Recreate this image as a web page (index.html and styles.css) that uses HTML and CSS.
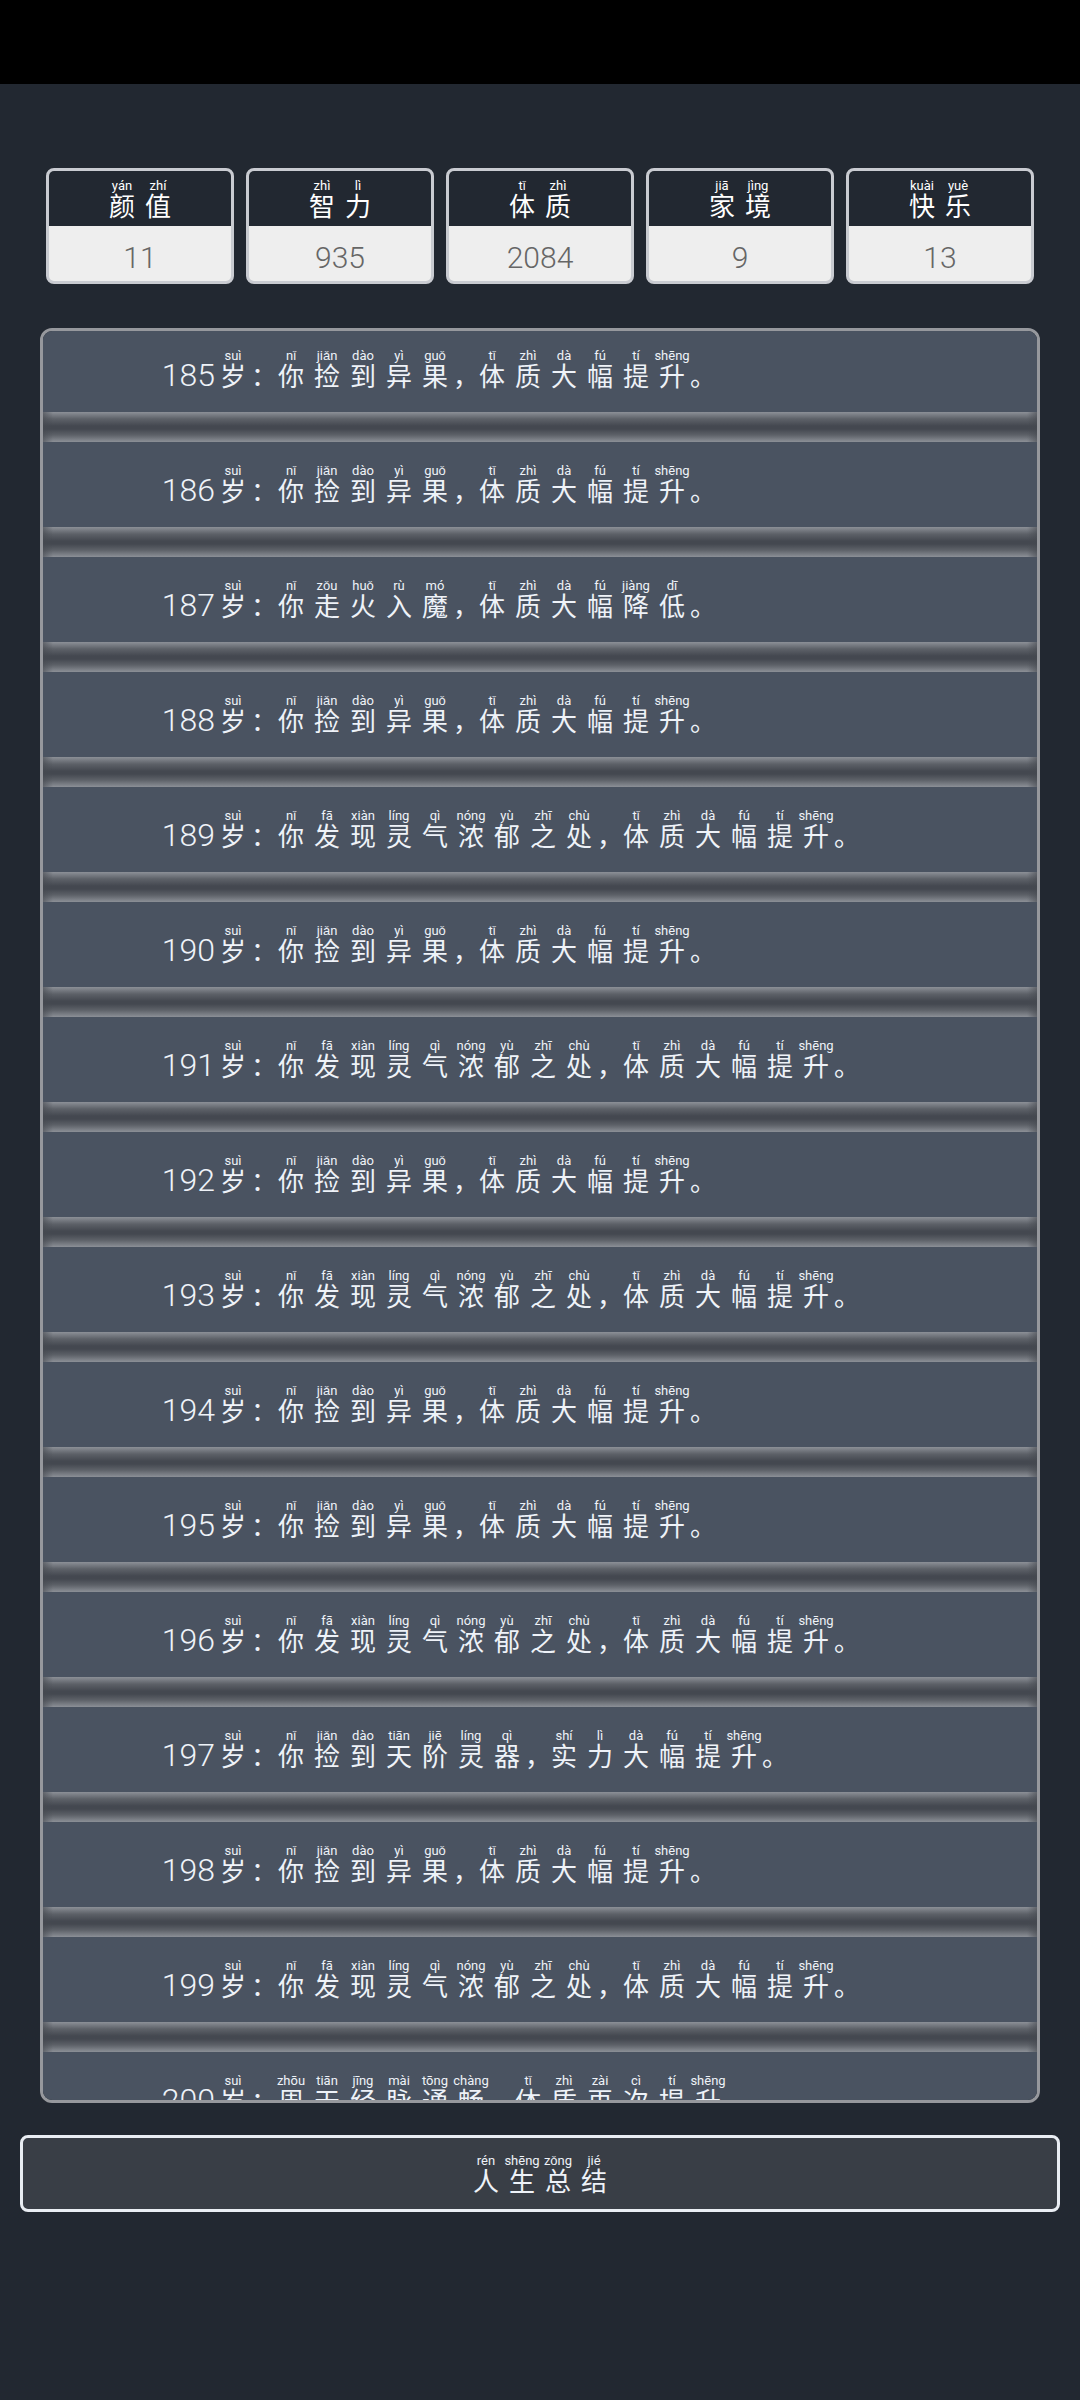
FILE: index.html
```
<!DOCTYPE html>
<html lang="zh-CN">
<head>
    <meta charset="UTF-8">
    <meta name="viewport" content="width=device-width, initial-scale=1.0">
    <title>人生</title>
    <link rel="stylesheet" href="styles.css">
</head>
<body>
    <div class="status-bar"></div>
    <main class="page">
        <dl class="stats">
            <div class="stat">
                <dt class="words" data-text="颜值"></dt>
                <dd>11</dd>
            </div>
            <div class="stat">
                <dt class="words" data-text="智力"></dt>
                <dd>935</dd>
            </div>
            <div class="stat">
                <dt class="words" data-text="体质"></dt>
                <dd>2084</dd>
            </div>
            <div class="stat">
                <dt class="words" data-text="家境"></dt>
                <dd>9</dd>
            </div>
            <div class="stat">
                <dt class="words" data-text="快乐"></dt>
                <dd>13</dd>
            </div>
        </dl>
        <ul class="life" id="life"></ul>
        <button class="summary words" type="button" data-text="人生总结"></button>
    </main>
    <script src="script.js"></script>
</body>
</html>
```
FILE: styles.css
```
* {
    box-sizing: border-box;
}
body {
    display: flex;
    flex-direction: column;
    height: 100vh;
    margin: 0;
    background-color: #222831;
    color: #eef2f8;
    font-family: "Noto Sans CJK SC", sans-serif;
}
.status-bar {
    flex: none;
    height: 84px;
    background-color: #000;
}
.page {
    display: flex;
    flex: 1;
    flex-direction: column;
    min-height: 0;
    padding: 84px 20px 188px;
}

/* characters with pinyin above */
.words {
    display: flex;
    align-items: flex-end;
    font-size: 26px;
    font-weight: 400;
    line-height: 24px;
}
.words ruby {
    display: flex;
    flex-direction: column-reverse;
    align-items: center;
    width: 36px;
}
.words rt {
    display: block;
    font-family: Roboto, sans-serif;
    font-size: 13px;
    font-weight: 400;
    line-height: 14px;
    white-space: nowrap;
}
.mark {
    width: 22px;
    text-align: center;
}
.mark.comma,
.mark.stop {
    width: 21px;
    text-align: left;
}
.age,
.stat dd {
    font-family: Roboto, sans-serif;
    font-weight: 300;
    font-size: 32px;
}

.stats {
    display: flex;
    gap: 12px;
    margin: 0 26px 44px;
}
.stat {
    flex: 1;
    border: 3px solid #c9cbd1;
    border-radius: 8px;
    background-color: #eee;
    overflow: hidden;
}
.stat dt {
    justify-content: center;
    height: 55px;
    padding-bottom: 9px;
    background-color: #222831;
    color: #fff;
}
.stat dd {
    height: 55px;
    margin: 0;
    padding-top: 8px;
    color: #666;
    font-size: 30px;
    line-height: 48px;
    text-align: center;
}

.life {
    flex: 1;
    min-height: 0;
    margin: 0 20px 32px;
    padding: 0;
    border: 3px solid #96989d;
    border-radius: 12px;
    list-style: none;
    overflow-y: auto;
    scrollbar-width: none;
}
.life li {
    height: 85px;
    padding: 22px 12px 0 115px;
    background-color: #4a5361;
}
/* shaded groove between two years */
.life li + li {
    height: 115px;
    padding-top: 52px;
    background:
        linear-gradient(90deg, #45495099, transparent 10px calc(100% - 10px), #45495099) top / 100% 30px no-repeat,
        linear-gradient(#8c9097, #5d6168 7px, #444850 14px 17px, #5d6168 23px, #8c9097 30px) top / 100% 30px no-repeat,
        #4a5361;
}
.age {
    width: 57px;
    text-align: right;
}

.summary {
    flex: none;
    justify-content: center;
    height: 77px;
    padding: 0 0 17px;
    border: 3px solid #e9edf3;
    border-radius: 8px;
    background-color: #393e46;
    color: #eef2f8;
    font-family: inherit;
    cursor: pointer;
}
```
FILE: script.js
```
const pinyin = {
    颜: "yán", 值: "zhí", 智: "zhì", 力: "lì", 体: "tǐ", 质: "zhì", 家: "jiā", 境: "jìng",
    快: "kuài", 乐: "yuè", 岁: "suì", 你: "nǐ", 捡: "jiǎn", 到: "dào", 异: "yì", 果: "guǒ",
    大: "dà", 幅: "fú", 提: "tí", 升: "shēng", 走: "zǒu", 火: "huǒ", 入: "rù", 魔: "mó",
    降: "jiàng", 低: "dī", 发: "fā", 现: "xiàn", 灵: "líng", 气: "qì", 浓: "nóng", 郁: "yù",
    之: "zhī", 处: "chù", 天: "tiān", 阶: "jiē", 器: "qì", 实: "shí", 周: "zhōu", 经: "jīng",
    脉: "mài", 通: "tōng", 畅: "chàng", 再: "zài", 次: "cì", 人: "rén", 生: "shēng", 总: "zǒng",
    结: "jié"
};
const marks = { "：": "colon", "，": "comma", "。": "stop" };

const fruit = "你捡到异果，体质大幅提升。";
const aura = "你发现灵气浓郁之处，体质大幅提升。";
const years = [
    fruit,
    fruit,
    "你走火入魔，体质大幅降低。",
    fruit,
    aura,
    fruit,
    aura,
    fruit,
    aura,
    fruit,
    fruit,
    aura,
    "你捡到天阶灵器，实力大幅提升。",
    fruit,
    aura,
    "周天经脉通畅，体质再次提升。"
];

function annotate(text) {
    return [...text].map(char => {
        if (marks[char]) {
            return `<span class="mark ${marks[char]}">${char}</span>`;
        }
        return `<ruby>${char}<rt>${pinyin[char]}</rt></ruby>`;
    }).join("");
}

const life = document.getElementById("life");
years.forEach((text, i) => {
    const li = document.createElement("li");
    li.innerHTML = `<div class="words"><span class="age">${185 + i}</span>${annotate("岁：" + text)}</div>`;
    life.appendChild(li);
});
life.scrollTop = 4;

document.querySelectorAll("[data-text]").forEach(el => {
    el.innerHTML = annotate(el.dataset.text);
});
```
